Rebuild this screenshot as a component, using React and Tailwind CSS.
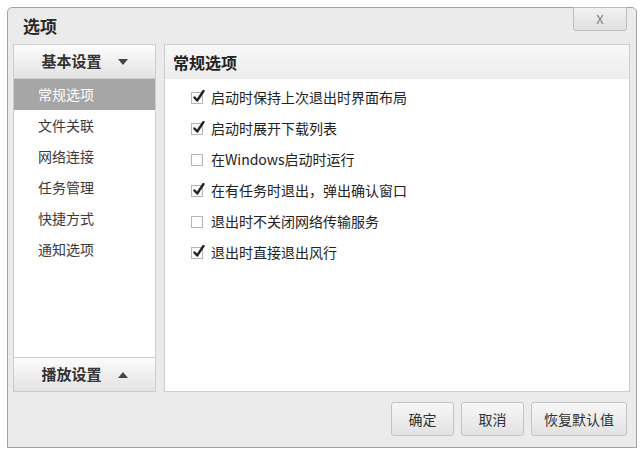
const font = { fontFamily: '"Noto Sans CJK SC", "Noto Sans", sans-serif' };

const sideItems = ['常规选项', '文件关联', '网络连接', '任务管理', '快捷方式', '通知选项'];

const options = [
  { label: '启动时保持上次退出时界面布局', checked: true },
  { label: '启动时展开下载列表', checked: true },
  { label: '在Windows启动时运行', checked: false },
  { label: '在有任务时退出，弹出确认窗口', checked: true },
  { label: '退出时不关闭网络传输服务', checked: false },
  { label: '退出时直接退出风行', checked: true },
];

function Check({ checked }) {
  return (
    <div className="relative w-[12px] h-[12px] border border-[#b5b5b5] bg-white shrink-0">
      {checked && (
        <svg className="absolute left-[1px] top-[-3px]" width="12" height="13" viewBox="0 0 12 13">
          <path d="M1.5 7.5 L4.2 10.5 L10.5 1" fill="none" stroke="#222" strokeWidth="2.4" strokeLinecap="round" strokeLinejoin="round" />
        </svg>
      )}
    </div>
  );
}

export default function App() {
  return (
    <div className="w-[640px] h-[449px] bg-white pt-[7px] pl-[7px]" style={font}>
      <div className="w-[630px] h-[441px] border border-[#a3a3a3] rounded-t-[5px] bg-[#ebebeb] flex flex-col">
        {/* title bar */}
        <div className="h-[36px] flex items-start justify-between shrink-0">
          <div className="pl-[15px] pt-[7px] text-[17px] leading-[22px] font-bold text-[#2a2a2a]">选项</div>
          <div className="mr-[9px] mt-[-1px] w-[54px] h-[24px] border border-[#bdbdbd] rounded-b-[3px] bg-gradient-to-b from-[#f2f2f2] to-[#e0e0e0] flex items-center justify-center text-[15px] leading-none pb-[3px] text-[#8a8a8a]">
            x
          </div>
        </div>

        {/* body */}
        <div className="flex gap-[8px] px-[5px] h-[348px] shrink-0">
          <div className="w-[143px] border border-[#cdcdcd] bg-white flex flex-col">
            <div className="h-[34px] flex items-center justify-center gap-[16px] bg-gradient-to-b from-[#fcfcfc] to-[#e3e3e3] border-b border-[#d0d0d0]">
              <span className="text-[15px] font-bold text-[#333]">基本设置</span>
              <svg width="10" height="6" viewBox="0 0 10 6"><path d="M0 0 L10 0 L5 6 Z" fill="#444" /></svg>
            </div>
            <div className="flex-1 flex flex-col">
              {sideItems.map((t, i) => (
                <div
                  key={t}
                  className={`h-[31px] flex items-center pl-[24px] text-[14px] ${i === 0 ? 'bg-[#a6a6a6] text-white' : 'text-[#3a3a3a]'}`}
                >
                  {t}
                </div>
              ))}
            </div>
            <div className="h-[34px] flex items-center justify-center gap-[16px] bg-gradient-to-b from-[#fcfcfc] to-[#e3e3e3] border-t border-[#d0d0d0]">
              <span className="text-[15px] font-bold text-[#333]">播放设置</span>
              <svg width="10" height="6" viewBox="0 0 10 6"><path d="M0 6 L10 6 L5 0 Z" fill="#444" /></svg>
            </div>
          </div>

          <div className="w-[466px] border border-[#cdcdcd] bg-white flex flex-col">
            <div className="h-[34px] flex items-center pl-[8px] bg-gradient-to-b from-[#f8f8f8] to-[#ececec] text-[16px] font-bold text-[#222]">
              常规选项
            </div>
            <div className="flex flex-col pl-[26px] pt-[3px]">
              {options.map((o) => (
                <div key={o.label} className="h-[31px] flex items-center gap-[8px] text-[14px] text-[#222]">
                  <Check checked={o.checked} />
                  <span>{o.label}</span>
                </div>
              ))}
            </div>
          </div>
        </div>

        {/* footer */}
        <div className="flex-1 flex items-start justify-end gap-[7px] pr-[9px] pt-[10px]">
          {['确定', '取消', '恢复默认值'].map((b) => (
            <div
              key={b}
              className={`h-[34px] ${b.length > 2 ? 'w-[96px]' : 'w-[63px]'} border border-[#c4c4c4] rounded-[3px] bg-gradient-to-b from-[#f7f7f7] to-[#e2e2e2] flex items-center justify-center text-[14px] text-[#333]`}
            >
              {b}
            </div>
          ))}
        </div>
      </div>
    </div>
  );
}
